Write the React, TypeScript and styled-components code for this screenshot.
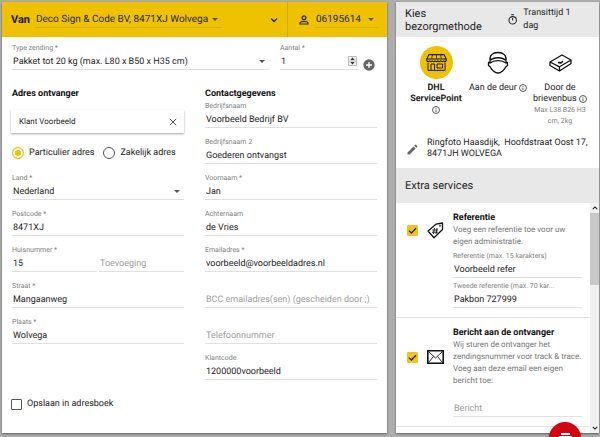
import React, { useId } from "react";
import styled, { createGlobalStyle } from "styled-components";

const Global = createGlobalStyle`
  *, *::before, *::after { box-sizing: border-box; }
  body {
    margin: 0;
    overflow: hidden;
    background: #adadad;
    color: #252525;
    font: 9px/16px Roboto, "Liberation Sans", sans-serif;
    text-rendering: geometricPrecision;
  }
  button, input, select { font: inherit; color: inherit; text-rendering: inherit; }
  h1, h2, h3, p { margin: 0; }
`;

const Page = styled.main`
  display: flex;
  gap: 9px;
  height: 100vh;
  padding: 2px 1px 4px 2px;
`;
const Panel = styled.section<{ $grow: number }>`
  flex: ${(p) => p.$grow} 1 0;
  min-width: 0;
  display: flex;
  flex-direction: column;
  background: #fff;
  box-shadow: 0 1px 2px rgba(0, 0, 0, 0.45);
`;

const TopBar = styled.header`
  display: flex;
  height: 35px;
  flex: none;
  background: #eec200;
  font-size: 10px;
`;
const Sender = styled.div`
  flex: 1;
  min-width: 0;
  display: flex;
  align-items: center;
  gap: 5px;
  padding: 0 9px;
  border-right: 1px solid #d0aa04;
`;
const Account = styled.div`
  width: 99px;
  display: flex;
  align-items: center;
  gap: 6px;
  padding: 0 9px 0 11px;
`;
const VanTitle = styled.h1`
  padding-top: 1px;
  font-size: 11px;
  line-height: 16px;
  font-weight: 700;
  color: #1c1800;
`;
const Spacer = styled.div`
  flex: 1;
`;
const IconButton = styled.button`
  display: flex;
  flex: none;
  padding: 0;
  border: 0;
  background: none;
  color: inherit;
`;

const SelectWrap = styled.span<{ $line: string; $fill?: boolean }>`
  display: flex;
  align-items: center;
  flex: ${(p) => (p.$fill ? "1 1 0" : "none")};
  min-width: 0;
  border-bottom: 1px solid ${(p) => p.$line};
`;
const Select = styled.select`
  appearance: none;
  flex: 1;
  min-width: 0;
  height: 16px;
  padding: 1px 3px 0 1px;
  border: 0;
  background: transparent;
  outline: 0;
`;
const Caret = styled.span`
  flex: none;
  margin-right: 4px;
  border: 3px solid transparent;
  border-top-color: #555;
  border-bottom-width: 0;
`;

const Form = styled.form`
  flex: 1;
  display: flex;
  flex-direction: column;
  padding: 6px 10px 0;
`;
const ShipmentRow = styled.div`
  display: grid;
  grid-template-columns: 257fr 97fr;
  column-gap: 11px;
`;
const CountGroup = styled.div`
  display: grid;
  grid-template-columns: 1fr 12px;
  column-gap: 4px;
  align-items: end;
  padding-right: 2px;
`;
const AddSlot = styled.div`
  padding-bottom: 8px;
`;
const Columns = styled.div`
  display: grid;
  grid-template-columns: 1fr 1fr;
  column-gap: 21px;
  margin-top: 8px;
`;
const Column = styled.div`
  display: flex;
  flex-direction: column;
  min-width: 0;
`;
const GroupTitle = styled.h2`
  padding-top: 1px;
  font-size: 9px;
  line-height: 13px;
  font-weight: 700;
  color: #111;
`;

const FieldBox = styled.div<{ $tight?: boolean }>`
  display: flex;
  flex-direction: column;
  min-width: 0;
  height: 27px;
  margin-bottom: ${(p) => (p.$tight ? 3 : 9)}px;
`;
const FieldLabel = styled.label`
  flex: none;
  height: 10px;
  overflow: hidden;
  white-space: nowrap;
  text-overflow: ellipsis;
  font-size: 7px;
  line-height: 11px;
  color: #808080;
`;
const FieldInput = styled.input`
  width: 100%;
  height: 17px;
  padding: 2px 1px 0;
  border: 0;
  border-bottom: 1px solid #e0e0e0;
  background: transparent;
  outline: 0;
  &::placeholder { color: #a0a0a0; opacity: 1; }
`;
const Pair = styled.div`
  display: grid;
  grid-template-columns: 1fr 1fr;
  column-gap: 2px;
`;
const CountBox = styled.div`
  display: flex;
  align-items: center;
  height: 17px;
  padding-right: 2px;
  border-bottom: 1px solid #e0e0e0;
`;
const CountInput = styled.input`
  flex: 1;
  min-width: 0;
  height: 16px;
  padding: 1px 1px 0;
  border: 0;
  outline: 0;
  appearance: textfield;
  &::-webkit-inner-spin-button { display: none; }
`;

const SearchBox = styled.div`
  display: flex;
  align-items: center;
  height: 23px;
  margin: 9px 0 0 -1px;
  padding: 0 7px 0 8px;
  box-shadow: 0 1px 2px rgba(0, 0, 0, 0.35);
`;
const SearchInput = styled.input`
  flex: 1;
  min-width: 0;
  padding: 0;
  border: 0;
  outline: 0;
  font-size: 8px;
`;
const Radios = styled.div`
  display: flex;
  gap: 9px;
  height: 16px;
  margin: 12px 0;
`;
const Choice = styled.label`
  display: flex;
  align-items: center;
  gap: 5px;
  white-space: nowrap;
`;
const Radio = styled.input`
  appearance: none;
  flex: none;
  width: 12px;
  height: 12px;
  margin: 0;
  border: 1px solid #555;
  border-radius: 50%;
  &:checked {
    border-color: #eec200;
    background: #eec200;
    box-shadow: inset 0 0 0 2px #fff;
  }
`;
const Tick = styled.input`
  appearance: none;
  flex: none;
  width: 11px;
  height: 11px;
  margin: 0;
  border: 1px solid #555;
  border-radius: 1px;
  &:checked {
    border-color: #f0c419;
    background: #f0c419 url("data:image/svg+xml,%3Csvg xmlns='http://www.w3.org/2000/svg' viewBox='0 0 9 9'%3E%3Cpath d='M1 4.6 3.4 7 8 2.3' fill='none' stroke='%23222' stroke-width='1.3'/%3E%3C/svg%3E") center / 9px 9px no-repeat;
  }
`;
const SaveRow = styled.div`
  margin: 7px 0 0 -1px;
`;

const GreyBar = styled.header`
  display: flex;
  align-items: center;
  justify-content: space-between;
  flex: none;
  height: 35px;
  padding: 0 9px;
  background: #e8e8e8;
`;
const BarTitle = styled.h2`
  max-width: 90px;
  font-size: 11px;
  line-height: 13px;
  font-weight: 400;
`;
const Transit = styled.div`
  display: flex;
  align-items: center;
  gap: 6px;
  width: 82px;
  padding-right: 12px;
  line-height: 13px;
`;
const Methods = styled.div`
  display: grid;
  grid-template-columns: 1fr 1fr 1fr;
  flex: none;
  height: 93px;
  padding: 9px 8px 0 9px;
`;
const Method = styled.button<{ $active?: boolean }>`
  display: flex;
  flex-direction: column;
  align-items: center;
  justify-content: flex-start;
  padding: 0 ${(p) => (p.$active ? 3 : 0)}px;
  border: 0;
  background: none;
  line-height: 11px;
  font-weight: ${(p) => (p.$active ? 700 : 400)};
`;
const MethodIcon = styled.span<{ $active?: boolean }>`
  display: flex;
  align-items: center;
  justify-content: center;
  flex: none;
  width: 33px;
  height: 33px;
  margin-bottom: 4px;
  border-radius: 50%;
  background: ${(p) => (p.$active ? "#eec200" : "none")};
`;
const MethodNote = styled.small`
  font-size: 7px;
  line-height: 11px;
  color: #808080;
`;
const InfoSvg = styled.svg`
  vertical-align: -2px;
`;
const Address = styled.div`
  display: flex;
  align-items: center;
  gap: 9px;
  flex: none;
  height: 38px;
  padding: 0 8px 0 11px;
  line-height: 11px;
`;
const AddressText = styled.p`
  flex: 1;
`;

const Services = styled.div`
  display: flex;
  flex: 1;
  min-height: 0;
`;
const ServiceList = styled.div`
  flex: 1;
  min-width: 0;
  overflow: hidden;
`;
const Service = styled.article`
  display: grid;
  grid-template-columns: 11px 17px 1fr;
  column-gap: 9px;
  padding: 9px 8px 6px 11px;
  border-bottom: 1px solid #e4e4e4;
`;
const ServiceSummary = styled.div`
  display: grid;
  grid-template-columns: subgrid;
  grid-column: 1 / -1;
  align-items: center;
  margin-bottom: 3px;
`;
const ServiceFields = styled.div`
  grid-column: 3;
  min-width: 0;
`;
const ServiceTitle = styled.h3`
  font-size: 9px;
  line-height: 12px;
  font-weight: 700;
  color: #111;
`;
const ServiceText = styled.p`
  font-size: 8px;
  line-height: 12px;
  color: #777;
`;
const Scrollbar = styled.div`
  display: flex;
  flex-direction: column;
  width: 9px;
  background: #f0f0f0;
`;
const ScrollButton = styled.button`
  display: flex;
  align-items: center;
  justify-content: center;
  height: 10px;
  padding: 0;
  border: 0;
  background: none;
`;
const Thumb = styled.div`
  height: 72px;
  margin-bottom: auto;
  background: #c8c8c8;
`;
const Fab = styled.button`
  position: fixed;
  right: 19px;
  bottom: -17px;
  display: flex;
  justify-content: center;
  width: 32px;
  height: 32px;
  padding: 11px 0 0;
  border: 0;
  border-radius: 50%;
  background: #d40511;
  box-shadow: 0 1px 3px rgba(0, 0, 0, 0.4);
`;

const Chevron = ({ up, size = 8 }: { up?: boolean; size?: number }) => (
  <svg width={size} height={size} viewBox="0 0 8 8" fill="none" stroke="#222" strokeWidth="1.4" aria-hidden>
    <path d={up ? "M1 5.500 4 2.500 7 5.500" : "M1 2.500 4 5.500 7 2.500"} />
  </svg>
);
const PersonIcon = () => (
  <svg width="10" height="10" viewBox="0 0 10 10" fill="none" stroke="#222" strokeWidth="1.2" aria-hidden>
    <circle cx="5" cy="2.800" r="1.900" />
    <path d="M1 9V8.200C1 6.900 3.400 6.300 5 6.300s4 .6 4 1.900V9z" />
  </svg>
);
const PlusIcon = () => (
  <svg width="12" height="12" viewBox="0 0 12 12" aria-hidden>
    <circle cx="6" cy="6" r="5.700" fill="#666" />
    <path d="M6 3v6M3 6h6" stroke="#fff" strokeWidth="1.300" />
  </svg>
);
const SpinnerIcon = () => (
  <svg width="9" height="10" viewBox="0 0 9 10" aria-hidden>
    <path d="M.5.5h8v9h-8zM.5 5h8" fill="#f2f2f2" stroke="#bbb" />
    <path d="M2.300 4 4.500 1.500 6.700 4zM2.300 6 4.500 8.500 6.700 6z" fill="#333" />
  </svg>
);
const CrossIcon = () => (
  <svg width="8" height="8" viewBox="0 0 8 8" stroke="#555" strokeWidth="1" aria-hidden>
    <path d="m.8.8 6.400 6.400M7.200.8.8 7.200" />
  </svg>
);
const InfoIcon = () => (
  <InfoSvg width="8" height="8" viewBox="0 0 8 8" fill="none" stroke="#333" strokeWidth=".8" aria-hidden>
    <circle cx="4" cy="4" r="3.500" />
    <path d="M4 3.500v2.600M4 1.900v.9" />
  </InfoSvg>
);
const TimerIcon = () => (
  <svg width="11" height="13" viewBox="0 0 11 13" fill="none" stroke="#222" strokeWidth="1.200" aria-hidden>
    <circle cx="5.500" cy="7.500" r="4.400" />
    <path d="M3.800.8h3.400M5.500 4.800v3M8.700 4.300l1-1" />
  </svg>
);
const PencilIcon = () => (
  <svg width="11" height="11" viewBox="0 0 11 11" fill="#666" aria-hidden>
    <path d="M.5 8.400V10.500h2.100l6-6-2.100-2.100zM10.300 2.800a.6.6 0 0 0 0-.8L9 .7a.6.6 0 0 0-.8 0l-1 1 2.100 2.100z" />
  </svg>
);
const ShopIcon = () => (
  <svg width="21" height="17" viewBox="0 0 21 17" fill="none" stroke="#1c1800" strokeWidth="1" aria-hidden>
    <path d="M3 .6h15l2.200 4.400H.8z" strokeWidth="1.100" />
    <path d="M6.500 1 5.500 5M10.500 1v4M14.500 1l1 4" strokeWidth=".7" />
    <path d="M.8 5v1.500a1.400 1.400 0 0 0 2.770 0a1.400 1.400 0 0 0 2.770 0a1.400 1.400 0 0 0 2.770 0a1.400 1.400 0 0 0 2.770 0a1.400 1.400 0 0 0 2.770 0a1.400 1.400 0 0 0 2.770 0a1.400 1.400 0 0 0 2.770 0V5" strokeWidth="1.200" />
    <path d="M2 8.500v7.900h17V8.500M5 16v-6h3.500v6M11 10h5.500v4H11z" />
  </svg>
);
const CourierIcon = () => (
  <svg width="22" height="24" viewBox="0 0 22 24" fill="none" stroke="#111" strokeWidth="1.300" strokeLinejoin="round" aria-hidden>
    <path d="M3 9.500C2.300 4.500 5.500 1.500 11 1.500S19.700 4.500 19 9.500M3 9.500c3.500-3.700 12.500-3.700 16 0" />
    <path d="M3 9.500v2.500c4-3.300 12-3.300 16 0V9.500" />
    <path d="M3 11.500H1.500v3L3.300 16C4.200 18.500 8 22 11 22s6.800-3.500 7.700-6l1.800-1.500v-3H19" />
  </svg>
);
const BoxIcon = () => (
  <svg width="23" height="18" viewBox="0 0 23 18" fill="none" stroke="#111" strokeWidth="1.300" strokeLinejoin="round" aria-hidden>
    <path d="M1 8 13 1l9 5-11.500 6.800zM1 8v3.500l9.500 5.500L22 9.500V6M10.500 12.800V17" />
    <path d="m9 8.800 1.700-.3 1 .6L14 7.300" strokeWidth="1.500" />
  </svg>
);
const TagIcon = () => (
  <svg width="17" height="17" viewBox="0 0 17 17" fill="none" stroke="#111" strokeWidth="1.300" strokeLinejoin="round" aria-hidden>
    <path d="M1 9 9 2.200 15.500 1v6.500L7 15.800z" />
    <path d="M7.500 6 6.500 12M10 6 9 12M5.300 8h6M4.900 10.200h6" strokeWidth=".9" />
    <circle cx="13" cy="3.700" r=".7" strokeWidth=".8" />
  </svg>
);
const MailIcon = () => (
  <svg width="17" height="14" viewBox="0 0 17 14" fill="none" stroke="#111" aria-hidden>
    <path d="M.8.8h15.400v12.400H.8z" strokeWidth="1.600" />
    <path d="M1.500 1.500 8.500 8l7-6.500M1.500 12.500 6.500 6.500M15.500 12.500l-5-6" strokeWidth=".9" />
  </svg>
);
const PrintIcon = () => (
  <svg width="13" height="10" viewBox="0 0 13 10" fill="#fff" aria-hidden>
    <path d="M2 0h9v2H2zM0 3h13v6H0z" />
  </svg>
);

type FieldProps = { label?: string; value?: string; placeholder?: string; tight?: boolean };
const Field = ({ label, value, placeholder, tight }: FieldProps) => {
  const id = useId();
  return (
    <FieldBox $tight={tight}>
      <FieldLabel htmlFor={id}>{label}</FieldLabel>
      <FieldInput id={id} defaultValue={value} placeholder={placeholder} aria-label={label ?? placeholder} />
    </FieldBox>
  );
};
const SelectField = ({ label, value }: { label: string; value: string }) => {
  const id = useId();
  return (
    <FieldBox>
      <FieldLabel htmlFor={id}>{label}</FieldLabel>
      <SelectWrap $line="#e0e0e0">
        <Select id={id}><option>{value}</option></Select>
        <Caret />
      </SelectWrap>
    </FieldBox>
  );
};

export default function App() {
  return (
    <>
      <Global />
      <Page>
        <Panel $grow={385}>
          <TopBar>
            <Sender>
              <VanTitle>Van</VanTitle>
              <SelectWrap $line="#dcb200">
                <Select aria-label="Van"><option>Deco Sign &amp; Code BV, 8471XJ Wolvega</option></Select>
                <Caret />
              </SelectWrap>
              <Spacer />
              <IconButton aria-label="Uitklappen"><Chevron /></IconButton>
            </Sender>
            <Account>
              <PersonIcon />
              <SelectWrap $line="#dcb200" $fill>
                <Select aria-label="Account"><option>06195614</option></Select>
                <Caret />
              </SelectWrap>
            </Account>
          </TopBar>
          <Form>
            <ShipmentRow>
              <SelectField label="Type zending *" value="Pakket tot 20 kg (max. L80 x B50 x H35 cm)" />
              <CountGroup>
                <FieldBox>
                  <FieldLabel htmlFor="count">Aantal *</FieldLabel>
                  <CountBox>
                    <CountInput id="count" type="number" defaultValue="1" />
                    <SpinnerIcon />
                  </CountBox>
                </FieldBox>
                <AddSlot>
                  <IconButton type="button" aria-label="Toevoegen"><PlusIcon /></IconButton>
                </AddSlot>
              </CountGroup>
            </ShipmentRow>
            <Columns>
              <Column>
                <GroupTitle>Adres ontvanger</GroupTitle>
                <SearchBox>
                  <SearchInput aria-label="Zoek ontvanger" defaultValue="Klant Voorbeeld" />
                  <IconButton type="button" aria-label="Wissen"><CrossIcon /></IconButton>
                </SearchBox>
                <Radios>
                  <Choice><Radio type="radio" name="kind" defaultChecked />Particulier adres</Choice>
                  <Choice><Radio type="radio" name="kind" />Zakelijk adres</Choice>
                </Radios>
                <SelectField label="Land *" value="Nederland" />
                <Field label="Postcode *" value="8471XJ" />
                <Pair>
                  <Field label="Huisnummer *" value="15" />
                  <Field placeholder="Toevoeging" />
                </Pair>
                <Field label="Straat *" value="Mangaanweg" />
                <Field label="Plaats *" value="Wolvega" />
              </Column>
              <Column>
                <GroupTitle>Contactgegevens</GroupTitle>
                <Field label="Bedrijfsnaam" value="Voorbeeld Bedrijf BV" />
                <Field label="Bedrijfsnaam 2" value="Goederen ontvangst" />
                <Field label="Voornaam *" value="Jan" />
                <Field label="Achternaam" value="de Vries" />
                <Field label="Emailadres *" value="voorbeeld@voorbeeldadres.nl" />
                <Field placeholder="BCC emailadres(sen) (gescheiden door ;)" />
                <Field placeholder="Telefoonnummer" />
                <Field label="Klantcode" value="1200000voorbeeld" />
              </Column>
            </Columns>
            <SaveRow>
              <Choice><Tick type="checkbox" />Opslaan in adresboek</Choice>
            </SaveRow>
          </Form>
        </Panel>

        <Panel $grow={203}>
          <GreyBar>
            <BarTitle>Kies bezorgmethode</BarTitle>
            <Transit><TimerIcon /><span>Transittijd 1 dag</span></Transit>
          </GreyBar>
          <Methods>
            <Method $active>
              <MethodIcon $active><ShopIcon /></MethodIcon>
              <span>DHL ServicePoint <InfoIcon /></span>
            </Method>
            <Method>
              <MethodIcon><CourierIcon /></MethodIcon>
              <span>Aan de deur <InfoIcon /></span>
            </Method>
            <Method>
              <MethodIcon><BoxIcon /></MethodIcon>
              <span>Door de brievenbus <InfoIcon /></span>
              <MethodNote>Max L38 B26 H3 cm, 2kg</MethodNote>
            </Method>
          </Methods>
          <Address>
            <IconButton aria-label="Wijzigen"><PencilIcon /></IconButton>
            <AddressText>{"Ringfoto Haasdijk,\u00a0 Hoofdstraat Oost 17, 8471JH WOLVEGA"}</AddressText>
          </Address>
          <GreyBar><BarTitle>Extra services</BarTitle></GreyBar>
          <Services>
            <ServiceList>
              <Service>
                <ServiceSummary>
                  <Tick type="checkbox" defaultChecked aria-label="Referentie" />
                  <TagIcon />
                  <div>
                    <ServiceTitle>Referentie</ServiceTitle>
                    <ServiceText>Voeg een referentie toe voor uw eigen administratie.</ServiceText>
                  </div>
                </ServiceSummary>
                <ServiceFields>
                  <Field tight label="Referentie (max. 15 karakters)" value="Voorbeeld refer" />
                  <Field tight label="Tweede referentie (max. 70 kar..." value="Pakbon 727999" />
                </ServiceFields>
              </Service>
              <Service>
                <ServiceSummary>
                  <Tick type="checkbox" defaultChecked aria-label="Bericht aan de ontvanger" />
                  <MailIcon />
                  <div>
                    <ServiceTitle>Bericht aan de ontvanger</ServiceTitle>
                    <ServiceText>Wij sturen de ontvanger het zendingsnummer voor track &amp; trace. Voeg aan deze email een eigen bericht toe:</ServiceText>
                  </div>
                </ServiceSummary>
                <ServiceFields>
                  <Field tight placeholder="Bericht" />
                </ServiceFields>
              </Service>
            </ServiceList>
            <Scrollbar>
              <ScrollButton aria-label="Omhoog"><Chevron up size={6} /></ScrollButton>
              <Thumb />
              <ScrollButton aria-label="Omlaag"><Chevron size={6} /></ScrollButton>
            </Scrollbar>
          </Services>
        </Panel>
      </Page>
      <Fab aria-label="Afdrukken"><PrintIcon /></Fab>
    </>
  );
}
